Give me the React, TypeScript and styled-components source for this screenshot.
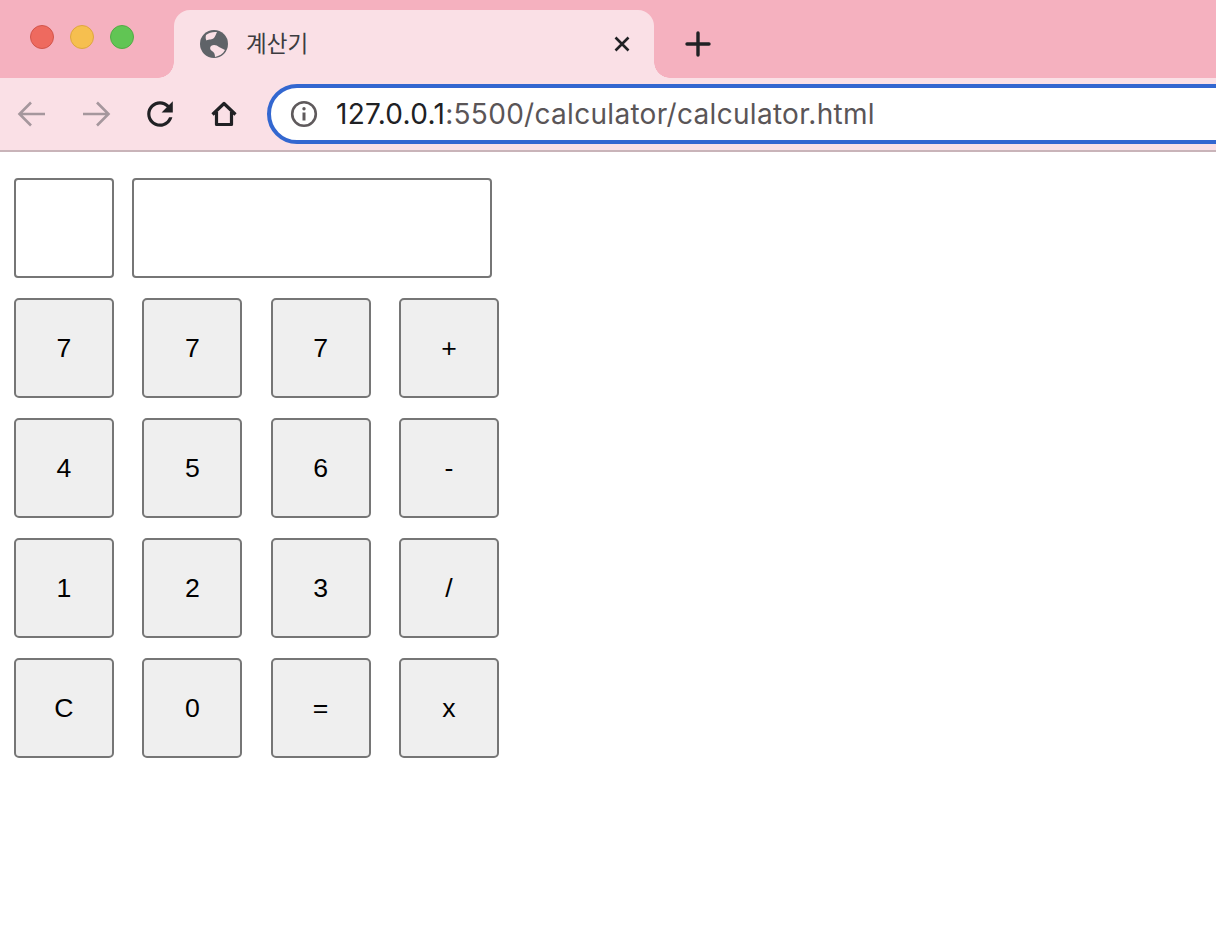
import React from 'react';
import styled, { createGlobalStyle } from 'styled-components';

const GlobalStyle = createGlobalStyle`
    html, body {
        margin: 0;
        padding: 0;
        background: #ffffff;
        overflow: hidden;
    }
    * {
        box-sizing: border-box;
    }
`;

const TabStrip = styled.div`
    display: flex;
    align-items: flex-end;
    height: 78px;
    background-color: #f5b1bf;
`;

const Lights = styled.div`
    display: flex;
    align-self: flex-start;
    gap: 16px;
    width: 174px;
    padding: 25px 0 0 30px;
`;

const Light = styled.span<{ $fill: string; $edge: string }>`
    width: 24px;
    height: 24px;
    border-radius: 50%;
    background-color: ${props => props.$fill};
    border: 1px solid ${props => props.$edge};
`;

const Tab = styled.div`
    position: relative;
    display: flex;
    align-items: center;
    width: 480px;
    height: 68px;
    padding: 0 20px 0 26px;
    border-radius: 16px 16px 0 0;
    background-color: #fae0e6;

    &::before, &::after {
        content: "";
        position: absolute;
        bottom: 0;
        width: 16px;
        height: 16px;
    }
    &::before {
        left: -16px;
        background: radial-gradient(circle at 0 0, #f5b1bf 15.5px, #fae0e6 16px);
    }
    &::after {
        right: -16px;
        background: radial-gradient(circle at 100% 0, #f5b1bf 15.5px, #fae0e6 16px);
    }
`;

const TabTitle = styled.span`
    flex: 1;
    margin: -5px 0 0 18px;
    font: 22.5px "Noto Sans CJK KR", sans-serif;
    color: #3c3c40;
`;

const NewTab = styled.div`
    display: flex;
    align-self: center;
    margin: 10px 0 0 30px;
`;

const Toolbar = styled.div`
    display: flex;
    align-items: center;
    height: 74px;
    padding-left: 16px;
    background-color: #fae0e6;
    border-bottom: 2px solid #c9b4b9;
`;

const NavIcons = styled.div`
    display: flex;
    gap: 32px;
    width: 251px;
`;

const Omnibox = styled.div`
    display: flex;
    flex: 1;
    align-items: center;
    height: 60px;
    gap: 18px;
    padding-left: 19px;
    margin-right: -40px;
    border: 4px solid #3367d0;
    border-radius: 30px;
    background-color: #ffffff;
    font: 28px Inter, "Liberation Sans", sans-serif;
    letter-spacing: 0.3px;
    color: #5a5557;
`;

const Host = styled.span`
    color: #202124;
`;

const Page = styled.div`
    display: flex;
    flex-direction: column;
    gap: 20px;
    padding: 26px 14px;
`;

const DisplayRow = styled.div`
    display: flex;
    gap: 18px;
`;

const Display = styled.input<{ $width: number }>`
    width: ${props => props.$width}px;
    height: 100px;
    padding: 0;
    border: 2px solid #767676;
    border-radius: 4px;
    background-color: #ffffff;
`;

const Keypad = styled.div`
    display: grid;
    grid-template-columns: repeat(4, 100px);
    grid-auto-rows: 100px;
    column-gap: 28.33px;
    row-gap: 20px;
`;

const Key = styled.button`
    padding: 0;
    border: 2px solid #767676;
    border-radius: 5px;
    background-color: #efefef;
    font: 26.67px "Liberation Sans", Arial, sans-serif;
    color: #000000;
`;

const Icon = styled.svg<{ $size: number }>`
    display: block;
    flex: none;
    width: ${props => props.$size}px;
    height: ${props => props.$size}px;
`;

const keys = ['7', '7', '7', '+', '4', '5', '6', '-', '1', '2', '3', '/', 'C', '0', '=', 'x'];

const App = () => {
    return (
        <>
            <GlobalStyle />
            <TabStrip>
                <Lights>
                    <Light $fill="#ee6a5f" $edge="#d2554b" />
                    <Light $fill="#f6bf4f" $edge="#dea63f" />
                    <Light $fill="#61c554" $edge="#52ab45" />
                </Lights>
                <Tab>
                    <Icon $size={28} viewBox="0 0 28 28">
                        <circle cx="14" cy="14" r="14" fill="#5f6368" />
                        <path d="M6 5C9 2.500 13 1.500 17 2c-1 2-1.500 4-3 6-2 2-5 1-7.500 2.500C5.500 9 5.500 7 6 5z" fill="#fae0e6" />
                        <path d="M11 16c3-2 6-.5 8 1 2 1 4 2 6 3-2 4-6 6-10 7 0-3-1-5-3-6-2-1-2.500-3.500-1-5z" fill="#fae0e6" />
                    </Icon>
                    <TabTitle>계산기</TabTitle>
                    <Icon $size={24} viewBox="0 0 24 24">
                        <path d="M5.500 5.500l13 13M18.500 5.500l-13 13" stroke="#202124" strokeWidth="2.600" fill="none" />
                    </Icon>
                </Tab>
                <NewTab>
                    <Icon $size={28} viewBox="0 0 28 28">
                        <path d="M14 3v22M3 14h22" stroke="#202124" strokeWidth="3.400" strokeLinecap="round" fill="none" />
                    </Icon>
                </NewTab>
            </TabStrip>
            <Toolbar>
                <NavIcons>
                    <Icon $size={32} viewBox="0 0 32 32">
                        <path d="M29 16H4M15 4.500L3.500 16 15 27.500" stroke="#a5979d" strokeWidth="2.600" fill="none" />
                    </Icon>
                    <Icon $size={32} viewBox="0 0 32 32">
                        <path d="M3 16h25M17 4.500L28.500 16 17 27.500" stroke="#a5979d" strokeWidth="2.600" fill="none" />
                    </Icon>
                    <Icon $size={32} viewBox="2 2 20 20">
                        <path d="M17.650 6.350C16.200 4.900 14.210 4 12 4c-4.420 0-7.990 3.580-7.990 8s3.570 8 7.990 8c3.730 0 6.840-2.550 7.730-6h-2.080c-.82 2.330-3.040 4-5.650 4-3.310 0-6-2.690-6-6s2.690-6 6-6c1.660 0 3.140.69 4.220 1.780L13 11h7V4l-2.350 2.350z" fill="#202124" />
                    </Icon>
                    <Icon $size={32} viewBox="0 0 32 32">
                        <path d="M4.500 16.500L16 5.500l11.500 11M8.500 14v12.500h15V14" stroke="#202124" strokeWidth="3.200" strokeLinejoin="round" fill="none" />
                    </Icon>
                </NavIcons>
                <Omnibox>
                    <Icon $size={28} viewBox="0 0 28 28">
                        <circle cx="14" cy="14" r="11.800" stroke="#5f5a5c" strokeWidth="2.600" fill="none" />
                        <circle cx="14" cy="8.800" r="1.700" fill="#5f5a5c" />
                        <path d="M14 12.500v8" stroke="#5f5a5c" strokeWidth="3" fill="none" />
                    </Icon>
                    <span><Host>127.0.0.1</Host>:5500/calculator/calculator.html</span>
                </Omnibox>
            </Toolbar>
            <Page>
                <DisplayRow>
                    <Display $width={100} />
                    <Display $width={360} />
                </DisplayRow>
                <Keypad>
                    {keys.map((k, i) => <Key key={i}>{k}</Key>)}
                </Keypad>
            </Page>
        </>
    );
};

export default App;
